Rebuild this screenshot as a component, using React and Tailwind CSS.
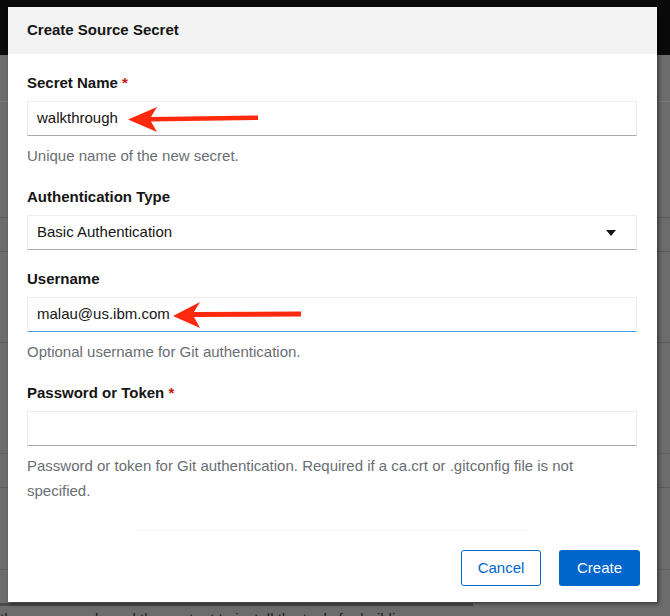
import React from "react";

const font = { fontFamily: '"Liberation Sans", Arial, sans-serif' };

function Label({ children, required, className = "" }) {
  return (
    <div className={"text-[15px] leading-[21px] font-bold text-[#151515] " + className}>
      {children}
      {required && <span className="text-[#c9190b]"> *</span>}
    </div>
  );
}

function Input({ value, focused }) {
  return (
    <div
      className={
        "mt-[8px] h-[35px] w-[610px] flex items-center pl-[9px] text-[15px] text-[#151515] border border-[#ececec] " +
        (focused ? "border-b-[#4a9fe6]" : "border-b-[#a9acaf]")
      }
    >
      {value}
    </div>
  );
}

function Helper({ children, className = "" }) {
  return <div className={"text-[15px] text-[#6a6e73] " + className}>{children}</div>;
}

export default function App() {
  return (
    <div className="relative w-[670px] h-[616px] overflow-hidden bg-[#6c6c6c]" style={font}>
      {/* dimmed background page */}
      <div className="h-[55px] bg-[#0a0a0a]" />
      <div className="h-px mt-[46px] bg-[#7a7a7a]" />
      <div className="text-[22px] leading-none text-[#888] absolute left-[-6px] top-[70px]">t</div>
      <div className="h-px mt-[115px] bg-[#5c5c5c]" />
      <div className="h-px mt-[33px] bg-[#5a5a5a]" />
      <div className="h-px mt-[90px] bg-[#5c5c5c]" />
      <div className="h-px mt-[110px] bg-[#606060]" />
      <div className="h-px mt-[33px] bg-[#5c5c5c]" />
      <div className="h-px mt-[81px] bg-[#606060]" />
      <div className="absolute left-0 top-[603px] w-[473px] h-[3px] bg-[#4a4a4a]" />
      <div className="absolute left-0 top-[609px] text-[15px] leading-[20px] text-[#1c1c1c] whitespace-nowrap">
        the source code and the content to install the tools for building
      </div>

      {/* modal */}
      <div className="absolute left-[8px] top-[7px] w-[649px] bg-white flex flex-col shadow-[2px_2px_4px_rgba(0,0,0,0.45)]">
        <div className="h-[47px] bg-[#f3f3f3] px-[19px] flex items-center text-[15px] font-bold text-[#151515]">
          Create Source Secret
        </div>
        <div className="px-[19px] pt-[18px] flex flex-col">
          <Label required>Secret Name</Label>
          <Input value="walkthrough" />
          <Helper className="mt-[9px] leading-[21px]">Unique name of the new secret.</Helper>

          <Label className="mt-[20px]">Authentication Type</Label>
          <div className="mt-[8px] h-[35px] w-[610px] flex items-center justify-between pl-[9px] pr-[20px] text-[15px] text-[#151515] border border-[#ececec] border-b-[#a9acaf]">
            <span>Basic Authentication</span>
            <svg width="10" height="6" viewBox="0 0 10 6">
              <polygon points="0,0 10,0 5,6" fill="#151515" />
            </svg>
          </div>

          <Label className="mt-[18px]">Username</Label>
          <Input value="malau@us.ibm.com" focused />
          <Helper className="mt-[9px] leading-[21px]">Optional username for Git authentication.</Helper>

          <Label className="mt-[20px]" required>
            Password or Token
          </Label>
          <Input value="" />
          <Helper className="mt-[7px] leading-[25px] w-[610px]">
            Password or token for Git authentication. Required if a ca.crt or .gitconfig file is not specified.
          </Helper>
        </div>
        <div className="mt-[27px] mx-auto w-[395px] h-px bg-[#f8f8f8]" />
        <div className="mt-[19px] mb-[16px] pr-[17px] flex justify-end gap-[18px]">
          <button className="w-[80px] h-[36px] rounded-[3px] border border-[#0066cc] text-[#0066cc] text-[15px] bg-white">
            Cancel
          </button>
          <button className="w-[81px] h-[36px] rounded-[3px] bg-[#0066cc] text-white text-[15px]">
            Create
          </button>
        </div>
      </div>

      {/* annotation arrows */}
      <svg className="absolute left-0 top-0 pointer-events-none" width="670" height="616" viewBox="0 0 670 616">
        <polygon points="128,119.5 157,107 151,117 258,115.5 258,120 151,121.5 157,132" fill="#ff2a0e" />
        <polygon points="173,316 200,302 194,312 301,311.5 301,316.5 194,317 200,328" fill="#ff2a0e" />
      </svg>
    </div>
  );
}
